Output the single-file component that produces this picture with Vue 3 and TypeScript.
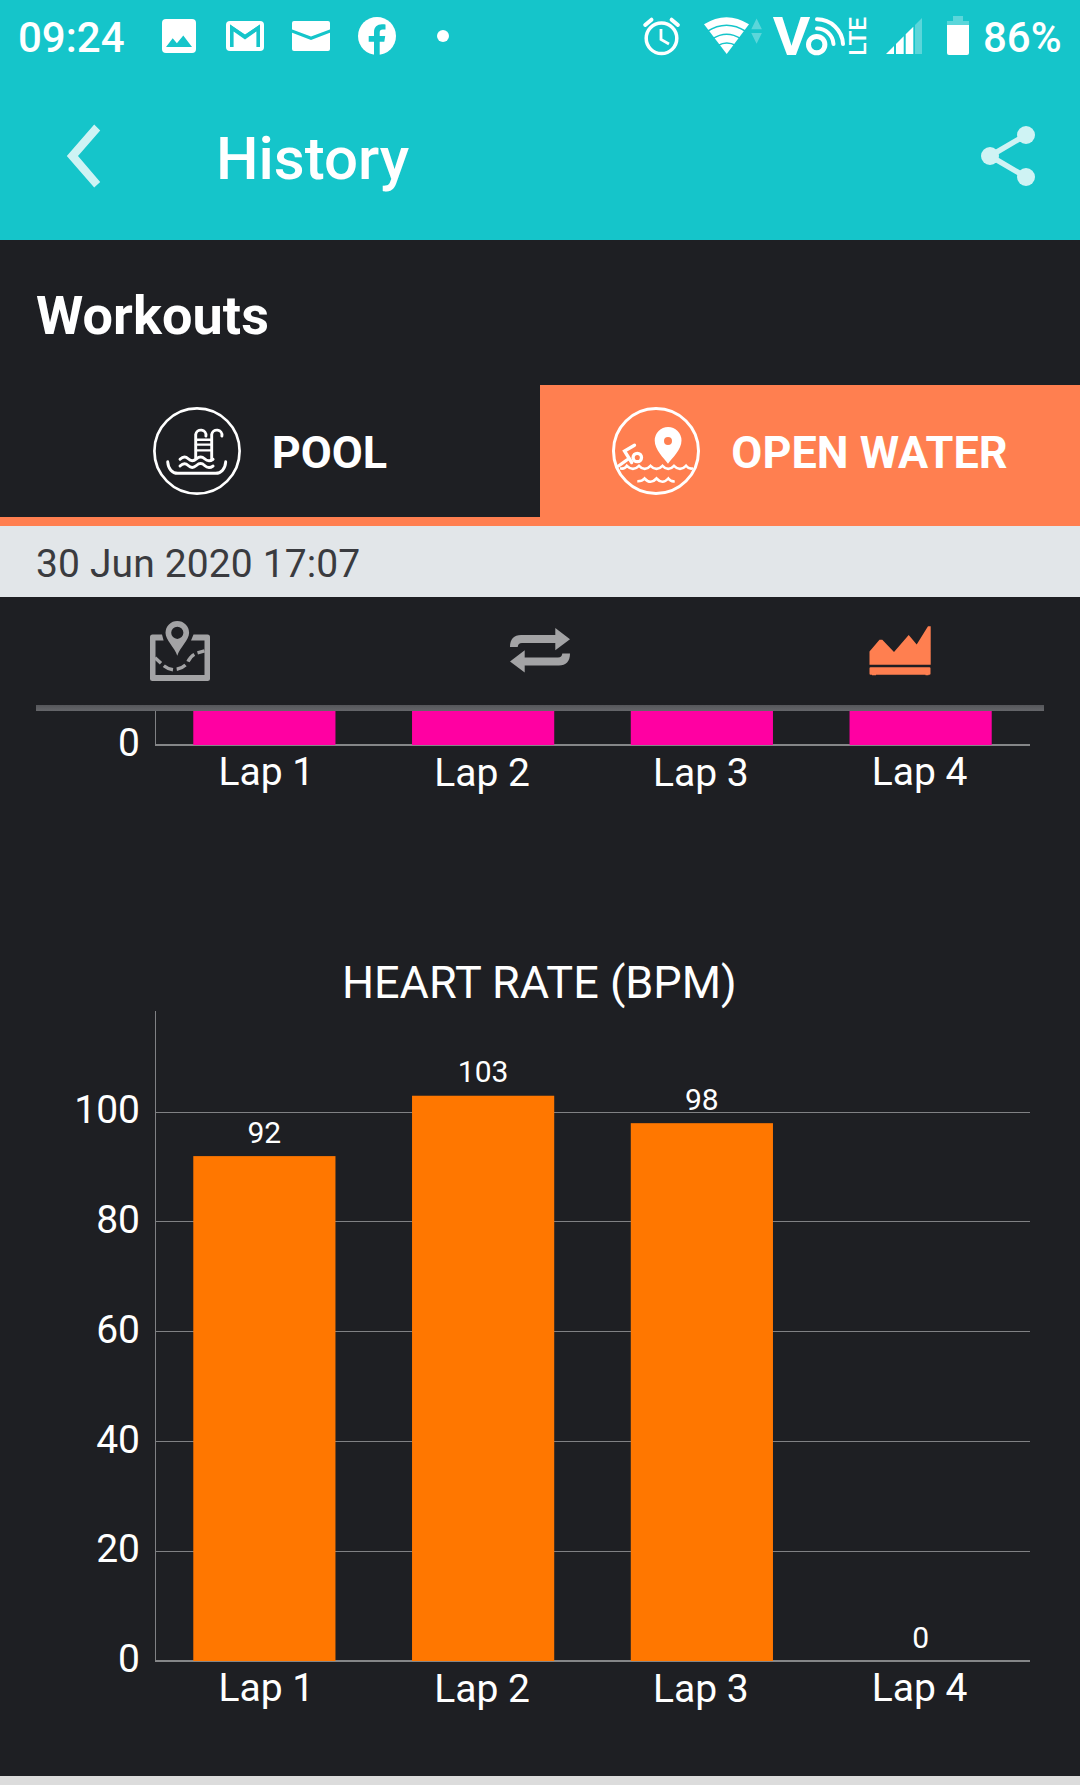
<script setup lang="ts">
interface Lap {
  label: string
  value: number
}

const laps: Lap[] = [
  { label: 'Lap 1', value: 92 },
  { label: 'Lap 2', value: 103 },
  { label: 'Lap 3', value: 98 },
  { label: 'Lap 4', value: 0 },
]
const ticks: number[] = [20, 40, 60, 80, 100]

// Plot geometry shared by both charts
const left = 155
const right = 1030
const step = (right - left) / 4
const barWidth = step * 0.65
const base = 661
const unit = 5.488

const barX = (i: number): number => left + i * step + (step - barWidth) / 2
const centre = (i: number): number => left + (i + 0.5) * step
const labelX = (i: number): number => centre(i) + (i === 0 ? 2 : -1)
const y = (v: number): number => base - v * unit
const labelShift = (i: number): number => (i === 1 || i === 2 ? 1 : 0)
</script>

<template>
  <div class="screen">
    <header class="top">
      <div class="status">
        <div class="status-left">
          <span class="clock">09:24</span>
          <svg class="notifications" width="300" height="72" viewBox="155 0 300 72">
            <rect x="162" y="19" width="34" height="34" rx="4" fill="#fff" />
            <path d="M166 47l6.7-8.7 4.2 5 6.4-7.8L192 47z" fill="#15c5ca" />
            <rect x="226" y="21" width="38" height="30" rx="4" fill="#fff" />
            <path d="M231.800 47V28L245 37.200 258.200 28V47" fill="none" stroke="#15c5ca" stroke-width="3.600" />
            <path d="M230 24.500l15 10 15-10v4.500l-15 8-15-8z" fill="#15c5ca" />
            <rect x="292" y="21" width="38" height="30" rx="2" fill="#fff" />
            <path d="M291.500 29.200L311 36.500l19.500-7.300v3.300L311 40l-19.500-7.500z" fill="#15c5ca" />
            <circle cx="377" cy="36" r="19" fill="#fff" />
            <path d="M374 56V41.700h-5.300V36H374v-3.500c0-5.500 3.200-8.200 8-8.200 1.800 0 3.200.2 3.500.3v5h-2.600c-2.300 0-3.200 1.200-3.200 3V36h5.500l-.9 5.700h-4.600V56z" fill="#15c5ca" />
            <circle cx="443" cy="36" r="6" fill="#fff" />
          </svg>
        </div>
        <div class="status-right">
          <svg width="335" height="72" viewBox="640 0 335 72" fill="#fff">
            <g fill="none" stroke="#fff">
              <circle cx="661.500" cy="38.300" r="15.300" stroke-width="3.500" />
              <path d="M661 29v10.500l8 4.500" stroke-width="2.800" />
              <path d="M645.200 25l6.300-5.300M677.900 25l-6.300-5.300" stroke-width="4" stroke-linecap="round" />
            </g>
            <path d="M726.700 54L704 24.300Q726.500 10 749 24.300z" />
            <g fill="none" stroke="#15c5ca" stroke-width="1.500">
              <path d="M707 31.500Q726.600 18.800 746 31.500M712.500 38.700Q726.600 29.600 741 38.700M718 45.500Q726.600 40.600 736 45.500" />
            </g>
            <path d="M751.300 29.300l5.300-10.800 5.300 10.800zM751.300 33h10.600l-5.300 10.800z" opacity=".3" />
            <text x="772.800" y="55" class="volte" font-size="53.500" textLength="37.500" lengthAdjust="spacingAndGlyphs">V</text>
            <g fill="none" stroke="#fff">
              <circle cx="816.700" cy="44.600" r="8.200" stroke-width="5" />
              <path d="M817 28.500a16.500 16.500 0 0 1 16.500 15.500M817 19.300a26 26 0 0 1 26 24.700" stroke-width="4" stroke-linecap="round" />
            </g>
            <text transform="translate(866 55.800) rotate(-90)" class="lte" font-size="23.800" textLength="39" lengthAdjust="spacingAndGlyphs">LTE</text>
            <path d="M886 54l8-8v8zM896 44l7.700-7.700V54H896zM905.700 34.300l7.600-7.600V54h-7.600z" />
            <path d="M915 25l7-7v36h-7z" opacity=".3" />
            <path d="M953 16h10v5h6v4h-22v-4h6z" opacity=".3" />
            <path d="M947 25h22v28a2 2 0 0 1-2 2h-18a2 2 0 0 1-2-2z" />
          </svg>
          <span class="percent">86%</span>
        </div>
      </div>
      <div class="appbar">
        <svg class="back" width="36" height="66" viewBox="0 0 36 66">
          <path d="M28.200.5l6 6L12 32l22.200 26-6 5.500L.8 32z" fill="#cff3f4" />
        </svg>
        <h1>History</h1>
        <svg class="share" width="54" height="60" viewBox="0 0 54 60" fill="#cff3f4">
          <path d="M45 9L9 30l36 21" fill="none" stroke="#cff3f4" stroke-width="5.500" />
          <circle cx="45" cy="9" r="9" />
          <circle cx="9" cy="30" r="9" />
          <circle cx="45" cy="51" r="9" />
        </svg>
      </div>
    </header>

    <h2>Workouts</h2>

    <nav class="tabs">
      <div class="tab">
        <svg width="88" height="88" viewBox="0 0 88 88" fill="none" stroke="#fff" stroke-linecap="round">
          <circle cx="44" cy="44" r="42.600" stroke-width="2.700" />
          <g stroke-width="2.900">
            <path d="M42.700 51V27.500a5 5 0 0 1 10.200 1.500M58.700 52V27.500a5 5 0 0 1 10.200 1.500" />
            <path d="M43 32.800h15M43 37.600h15M43 43.400h15" stroke-width="2.400" />
            <path d="M27 52.300q4.300-4.300 8.200-.5t8.200 0 8.200 0 8.500.5M27 59q4.300-4.300 8.200-.5t8.200 0 8.200 0 8.500.5" />
            <path d="M14.700 54.800c.5 7 4.500 11.500 10 11.500h38c5.500 0 9.500-4.500 10-11.500" />
          </g>
        </svg>
        <span>POOL</span>
      </div>
      <div class="tab active">
        <svg width="88" height="88" viewBox="0 0 88 88" fill="none" stroke="#fff">
          <circle cx="44" cy="44" r="42.500" stroke-width="3" />
          <path d="M56 56.800C52 51 42.700 43 42.700 33.500a13.400 13.400 0 0 1 26.800 0C69.500 43 60 51 56 56.800zM56 30a4 4 0 1 0 0 8 4 4 0 0 0 0-8z" fill="#fff" stroke="none" fill-rule="evenodd" />
          <g stroke-width="3.300" stroke-linecap="round">
            <path d="M22.500 38.200L12.500 44l7.200 11.500M6.500 59l9-6.500" />
            <circle cx="25.300" cy="50.500" r="4.200" />
          </g>
          <path d="M8 61.300Q12.500 62.500 14.900 58.800Q20.900 65 27 58.800Q32.700 65 38.500 58.800Q44.500 65 50.500 58.800Q56.200 65 62 58.800Q68 65 74 58.800Q77 62.500 81 61.300" stroke-width="2.600" />
          <path d="M25.300 74.300Q30 74.500 32.500 71.500Q38.500 78 44.500 71.500Q50.500 78 56.300 71.500Q59 75 62.700 74.300" stroke-width="2.600" />
        </svg>
        <span>OPEN WATER</span>
      </div>
    </nav>

    <div class="date">30 Jun 2020 17:07</div>

    <div class="views">
      <div class="view">
        <svg width="60" height="60" viewBox="0 0 60 60" fill="#a3a3a5">
          <path d="M12 13.500H2.500a2.500 2.500 0 0 0-2.500 2.500v41.500A2.500 2.500 0 0 0 2.500 60h55a2.500 2.500 0 0 0 2.500-2.500V16a2.500 2.500 0 0 0-2.500-2.500H43.500l-2.500 6h13.500V54h-49V19.500H13.600z" />
          <path d="M27.300 34.800C24.500 26 15.500 19.500 15.500 11.800a11.800 11.800 0 0 1 23.600 0C39.100 19.500 30 26 27.300 34.800zM27.300 5.700a6.100 6.100 0 1 0 0 12.200 6.100 6.100 0 0 0 0-12.200z" fill-rule="evenodd" />
          <path d="M5 36.700l6 5.500M13.800 44.700q4 3.300 9.200 4M26.700 48.300q5-.8 8.800-4.300M38 40.700q2-4.800 6.300-7.300M47.500 31.800l7-1.900" fill="none" stroke="#a3a3a5" stroke-width="3.400" />
        </svg>
      </div>
      <div class="view">
        <svg class="swap" width="60" height="45" viewBox="0 0 60 45" fill="#a3a3a5">
          <path d="M0 19C0 11 4 7 11 7h34.300V0L60 11.200 45.300 22.300V15H12c-2.700 0-4 1.300-4.300 4z" />
          <path d="M60 25.600c0 8-4 12-11 12H14.700v7L0 33.400l14.700-11.100v7.300H48c2.700 0 4-1.300 4.300-4z" />
        </svg>
      </div>
      <div class="view">
        <svg width="62" height="50" viewBox="0 0 62 50" fill="#ff7f50">
          <path d="M.5 25.500L10.500 13.700h2.800L25 26 39.700 9l8 9.500L59 .3h2.700v38.500H.5z" />
          <path d="M1.500 41.300h59a1 1 0 0 1 1 1v5.400a1 1 0 0 1-1 1h-1v.6h-3v-.6H7v.6H3v-.6H1.500a1 1 0 0 1-1-1v-5.400a1 1 0 0 1 1-1z" />
        </svg>
      </div>
    </div>
    <div class="divider"></div>

    <svg class="chart" width="1080" height="289" viewBox="0 711 1080 289">
      <path d="M155.500 711v34" class="line" />
      <path d="M155 745h875" class="axis" />
      <rect v-for="(lap, i) in laps" :key="lap.label" :x="barX(i)" y="711" :width="barWidth" height="34" fill="#ff00a2" />
      <text x="140" y="756" class="label" text-anchor="end">0</text>
      <text v-for="(lap, i) in laps" :key="'t' + lap.label" :x="labelX(i)" :y="785 + labelShift(i)" class="label" text-anchor="middle">{{ lap.label }}</text>
      <text x="539.300" y="998" class="title" text-anchor="middle">HEART RATE (BPM)</text>
    </svg>

    <svg class="chart" width="1080" height="776" viewBox="0 0 1080 776">
      <path v-for="t in ticks" :key="t" :d="`M155 ${Math.floor(y(t)) + 0.5}H1030`" class="line" />
      <path d="M155.500 11v651" class="line" />
      <path d="M155 661h875" class="axis" />
      <rect v-for="(lap, i) in laps" :key="lap.label" :x="barX(i)" :y="y(lap.value)" :width="barWidth" :height="lap.value * unit" fill="#ff7700" />
      <text v-for="t in [0, ...ticks]" :key="'y' + t" x="140" :y="Math.round(y(t) + 11.200)" class="label" text-anchor="end">{{ t }}</text>
      <text v-for="(lap, i) in laps" :key="'v' + lap.label" :x="centre(i)" :y="Math.floor(y(lap.value) - 13)" class="value" text-anchor="middle">{{ lap.value }}</text>
      <text v-for="(lap, i) in laps" :key="'l' + lap.label" :x="labelX(i)" :y="701 + labelShift(i)" class="label" text-anchor="middle">{{ lap.label }}</text>
    </svg>
    <div class="foot"></div>
  </div>
</template>

<style>
body {
  margin: 0;
  background: #1e1f23;
}
</style>

<style scoped>
.screen {
  width: 1080px;
  height: 1785px;
  overflow: hidden;
  display: flex;
  flex-direction: column;
  background: #1e1f23;
  color: #fff;
  font-family: Roboto, 'Noto Sans', sans-serif;
}
.screen > * {
  flex: none;
}
svg {
  display: block;
  flex: none;
}
.chart {
  overflow: visible;
}
h1,
h2 {
  margin: 0;
}
.top {
  background: #15c5ca;
  height: 240px;
}
.status {
  height: 75px;
  display: flex;
  justify-content: space-between;
  line-height: 75px;
  font-size: 42px;
  font-weight: 500;
}
.status-left,
.status-right {
  display: flex;
}
.clock {
  width: 137px;
  padding-left: 18px;
}
.percent {
  width: 97px;
  padding-left: 8px;
}
.appbar {
  height: 165px;
  display: flex;
  align-items: center;
}
.back {
  margin-left: 66px;
  padding-bottom: 2px;
}
h1 {
  flex: 1;
  margin-left: 114px;
  padding-top: 1px;
  font-size: 60px;
  font-weight: 500;
}
.share {
  margin-right: 45px;
  padding-bottom: 3px;
}
h2 {
  height: 145px;
  line-height: 151px;
  padding-left: 36px;
  font-size: 54px;
  font-weight: 700;
  letter-spacing: 0.1px;
}
.tabs {
  height: 132px;
  display: flex;
  border-bottom: 9px solid #ff7f50;
}
.tab {
  flex: 1;
  display: flex;
  align-items: center;
  justify-content: center;
  gap: 31px;
  font-size: 45px;
  font-weight: 700;
}
.tab span {
  padding-top: 3px;
}
.active {
  background: #ff7f50;
}
.date {
  height: 71px;
  line-height: 77px;
  padding-left: 36px;
  background: #e2e6e9;
  color: #3a3b3f;
  font-size: 39px;
  letter-spacing: 0.13px;
}
.views {
  height: 108px;
  display: flex;
}
.view {
  flex: 1;
  display: flex;
  align-items: center;
  justify-content: center;
}
.swap {
  margin-bottom: 1px;
}
.divider {
  height: 6px;
  margin: 0 36px;
  background: linear-gradient(#55565a, #65666a);
}
.line {
  stroke: #808184;
  stroke-width: 1;
}
.axis {
  stroke: #858688;
  stroke-width: 2;
}
text {
  fill: #fff;
}
.label {
  font-size: 39px;
}
.value {
  font-size: 30px;
}
.title {
  font-size: 45px;
}
.volte {
  font-weight: 700;
}
.lte {
  font-weight: 500;
}
.foot {
  height: 9px;
  background: #dcdcdc;
}
</style>
